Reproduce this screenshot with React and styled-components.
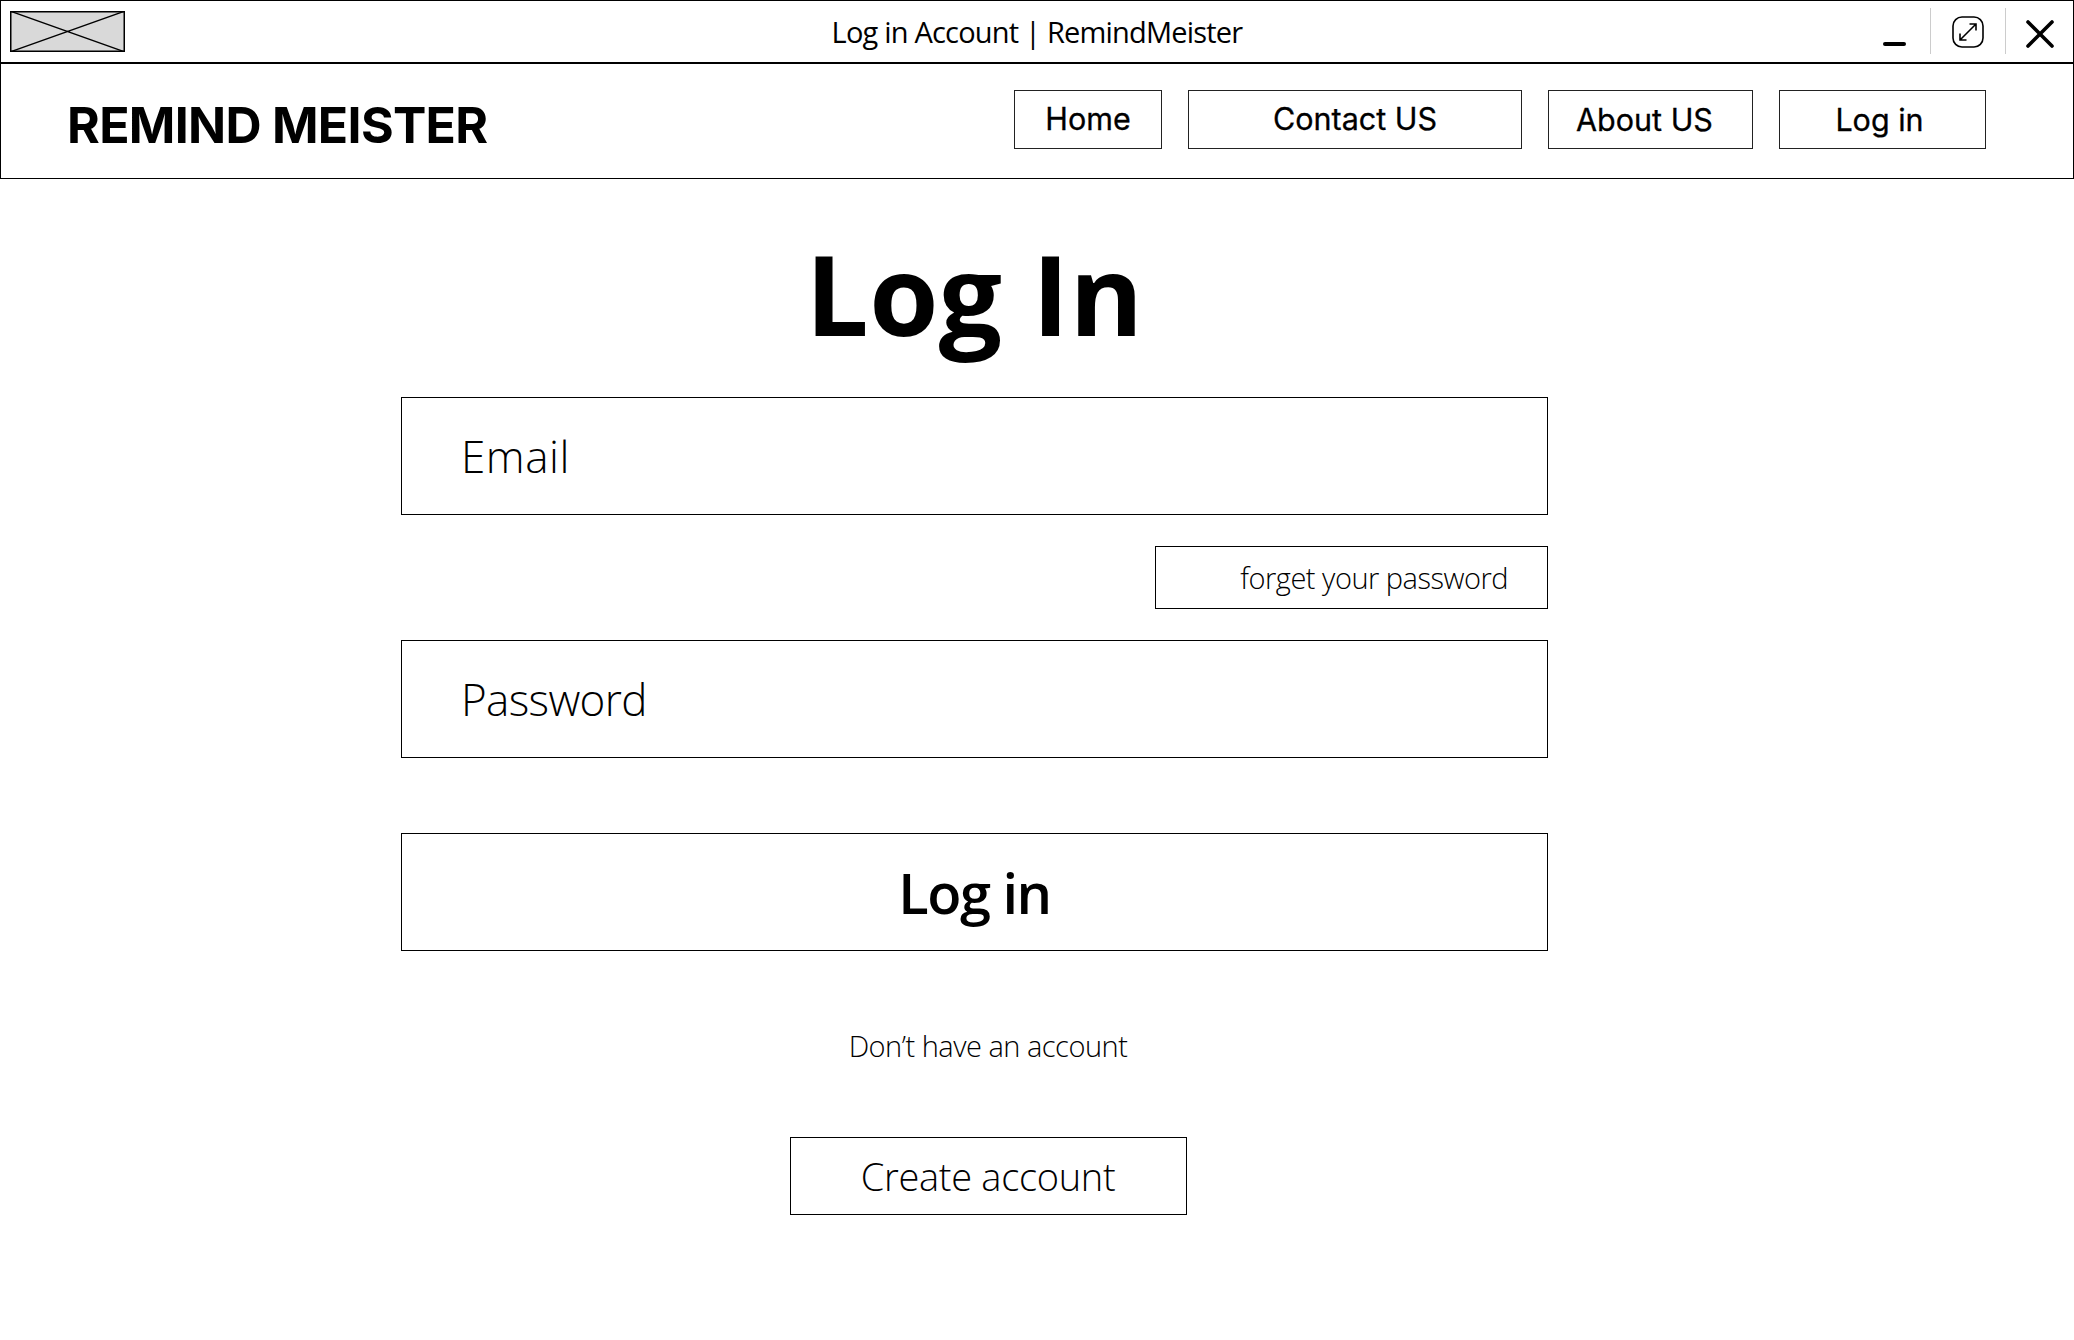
import React from "react";
import styled, { createGlobalStyle } from "styled-components";

const GlobalStyle = createGlobalStyle`
  * {
    box-sizing: border-box;
  }
  body {
    margin: 0;
    background: #fff;
    color: #000;
    font-family: "Open Sans", sans-serif;
  }
`;

const App = () => {
  return (
    <>
      <GlobalStyle />
      <Page>
        <TitleBar>
          <Placeholder viewBox="0 0 115 41" preserveAspectRatio="none">
            <rect x="0.75" y="0.75" width="113.5" height="39.5" fill="#d9d9d9" stroke="#000" strokeWidth="1.5" />
            <path d="M0 0 115 41M115 0 0 41" stroke="#000" strokeWidth="1.3" fill="none" />
          </Placeholder>
          <WindowTitle>Log in Account | RemindMeister</WindowTitle>
          <Controls>
            <Minimize />
            <ControlCell>
              <svg width="34" height="34" viewBox="0 0 34 34" fill="none" stroke="#000">
                <rect x="2" y="2" width="30" height="30" rx="9" strokeWidth="1.6" />
                <path d="M9 25 25 9M18.5 9H25V15.5M9 18.5V25H15.5" strokeWidth="1.6" />
              </svg>
            </ControlCell>
            <ControlCell>
              <CloseIcon viewBox="0 0 28 28" fill="none" stroke="#000">
                <path d="M2 2 26 26M26 2 2 26" strokeWidth="3.6" strokeLinecap="round" />
              </CloseIcon>
            </ControlCell>
          </Controls>
        </TitleBar>

        <NavBar>
          <Brand>REMIND MEISTER</Brand>
          <NavLinks>
            <NavButton $width={148} $lift={2}>Home</NavButton>
            <NavButton $width={334} $lift={2}>Contact US</NavButton>
            <NavButton $width={205} $shift={12}>About US</NavButton>
            <NavButton $width={207} $shift={6}>Log in</NavButton>
          </NavLinks>
        </NavBar>

        <Main>
          <Heading>Log In</Heading>
          <Field $spacing={0.5}>Email</Field>
          <ForgetRow>
            <ForgetBox>forget your password</ForgetBox>
          </ForgetRow>
          <Field $spacing={-0.65}>Password</Field>
          <SubmitButton>Log in</SubmitButton>
          <SignUp>
            <SignUpText>Don’t have an account</SignUpText>
            <CreateButton>Create account</CreateButton>
          </SignUp>
        </Main>
      </Page>
    </>
  );
};

// Styled Component

const Page = styled.div`
  width: 2074px;
  height: 1340px;
  overflow: hidden;
  background: #fff;
`;

const TitleBar = styled.header`
  height: 64px;
  display: grid;
  grid-template-columns: 1fr auto 1fr;
  align-items: center;
  border: 1px solid #000;
  border-bottom-width: 2px;
`;

const Placeholder = styled.svg`
  width: 115px;
  height: 41px;
  display: block;
  margin-left: 9px;
`;

const WindowTitle = styled.div`
  font-size: 29px;
  font-weight: 400;
  line-height: 1;
  letter-spacing: -0.8px;
  margin-top: -1px;
`;

const Controls = styled.div`
  justify-self: end;
  display: flex;
  align-items: center;
`;

const Minimize = styled.span`
  width: 23px;
  height: 4px;
  margin: 24px 24px 0 0;
  background: #000;
  border-radius: 2px;
`;

const ControlCell = styled.div`
  width: 75px;
  height: 46px;
  display: flex;
  align-items: center;
  justify-content: center;
  padding-top: 3px;
  border-left: 1px solid #ccc;
  margin-top: -2px;
  &:last-child {
    width: 68px;
  }
`;

const CloseIcon = styled.svg`
  width: 28px;
  height: 28px;
  margin-top: 3px;
`;

const NavBar = styled.nav`
  height: 115px;
  display: flex;
  align-items: center;
  justify-content: space-between;
  padding: 0 87px 0 66px;
  border: 1px solid #000;
  border-top: none;
`;

const Brand = styled.h1`
  margin: 8px 0 0;
  font-family: Inter, sans-serif;
  font-size: 50px;
  font-weight: 700;
  line-height: 1;
  letter-spacing: -0.7px;
`;

const NavLinks = styled.div`
  display: flex;
  gap: 26px;
  margin-top: -3px;
`;

const NavButton = styled.button`
  width: ${(p) => p.$width}px;
  height: 59px;
  padding: 0 ${(p) => p.$shift || 0}px ${(p) => p.$lift || 0}px 0;
  background: #fff;
  color: #000;
  border: 1px solid #222;
  font-family: Inter, sans-serif;
  font-size: 30.5px;
  font-weight: 400;
  -webkit-text-stroke: 0.3px #000;
`;

const Main = styled.main`
  width: 1147px;
  margin-left: 401px;
  display: flex;
  flex-direction: column;
`;

const Heading = styled.h2`
  height: 218px;
  margin: 0;
  padding-top: 23px;
  font-size: 112px;
  font-weight: 700;
  line-height: 181px;
  letter-spacing: 0.4px;
  text-align: center;
`;

const Field = styled.div`
  height: 118px;
  display: flex;
  align-items: center;
  padding-left: 59px;
  border: 1px solid #000;
  font-size: 44px;
  font-weight: 300;
  letter-spacing: ${(p) => p.$spacing}px;
`;

const ForgetRow = styled.div`
  display: flex;
  justify-content: flex-end;
  padding: 31px 0;
`;

const ForgetBox = styled.div`
  width: 393px;
  height: 63px;
  display: flex;
  align-items: center;
  justify-content: flex-end;
  padding-right: 39px;
  border: 1px solid #000;
  font-size: 29px;
  font-weight: 300;
  letter-spacing: -0.5px;
`;

const SubmitButton = styled.button`
  height: 118px;
  margin-top: 75px;
  background: #fff;
  color: #000;
  border: 1px solid #000;
  font-family: "Open Sans", sans-serif;
  font-size: 56px;
  font-weight: 600;
  letter-spacing: -1.5px;
`;

const SignUp = styled.section`
  display: flex;
  flex-direction: column;
  align-items: center;
  padding-left: 27px;
`;

const SignUpText = styled.p`
  margin: 76px 0 0;
  height: 110px;
  font-size: 29px;
  font-weight: 300;
  line-height: 38px;
  letter-spacing: -0.5px;
`;

const CreateButton = styled.button`
  width: 397px;
  height: 78px;
  background: #fff;
  color: #000;
  border: 1px solid #000;
  font-family: "Open Sans", sans-serif;
  font-size: 38px;
  font-weight: 300;
  letter-spacing: -0.3px;
`;

export default App;
